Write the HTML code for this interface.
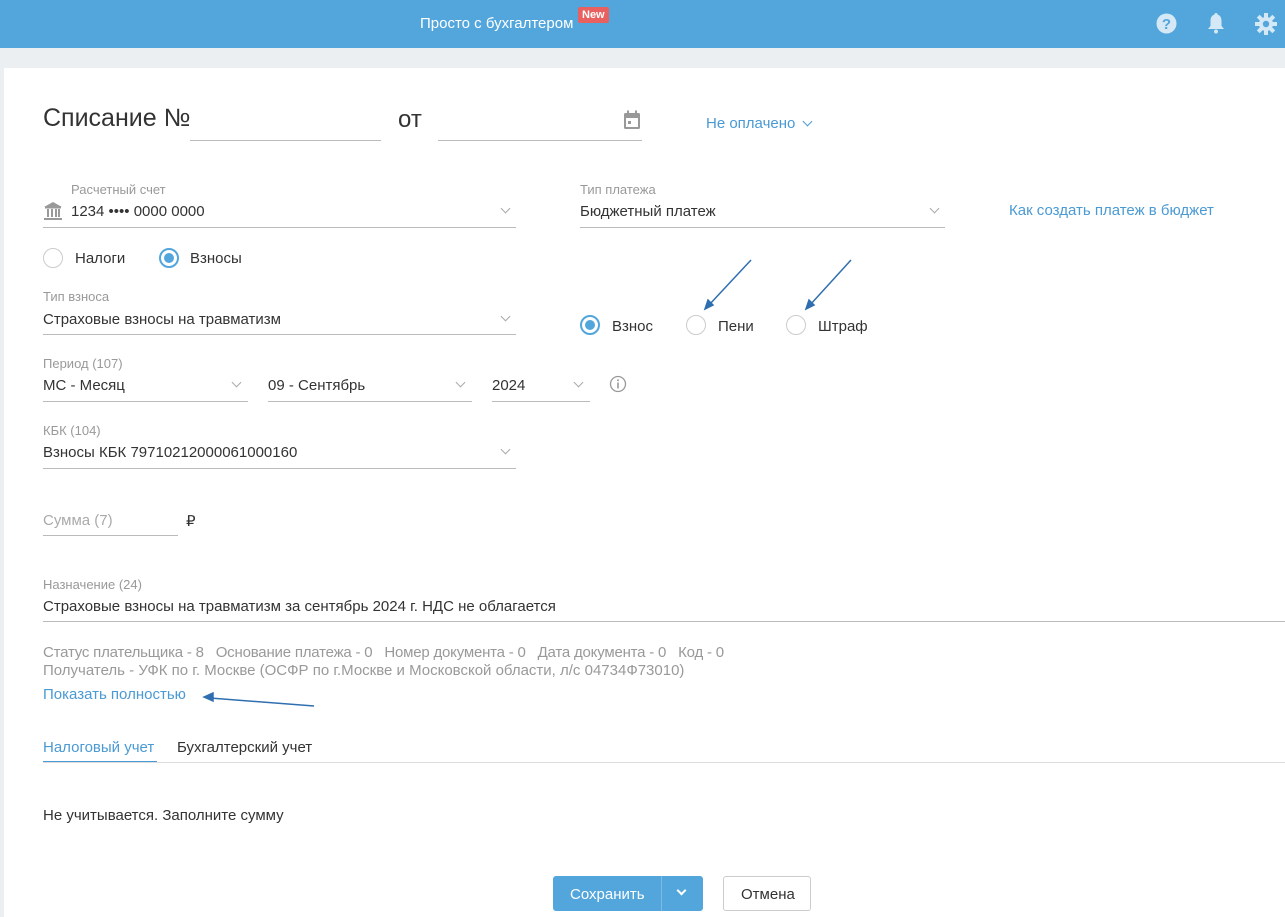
<!DOCTYPE html><html><head><meta charset="utf-8"><style>
*{box-sizing:border-box}body{margin:0;width:1285px;height:917px;overflow:hidden;background:#eceff2;font-family:"Liberation Sans","Noto Sans CJK SC",sans-serif;color:#333;position:relative}
.hdr{position:absolute;left:0;top:0;width:1285px;height:48px;background:#53a6dc}
.main{position:absolute;left:4px;top:68px;width:1281px;height:849px;background:#fff}
.a{position:absolute;white-space:nowrap}
.lbl{font-size:13px;color:#999}
.v{font-size:15px;color:#333}
.ln{position:absolute;height:1px;background:#bbb}
.chev{position:absolute;width:7px;height:7px;border-right:1.5px solid #aaa;border-bottom:1.5px solid #aaa;transform:rotate(45deg)}
.r{position:absolute;width:20px;height:20px;border-radius:50%;border:1px solid #ccc;background:#fff}
.r.on{border:2px solid #53a6dc}.r.on:after{content:"";position:absolute;left:3px;top:3px;width:10px;height:10px;border-radius:50%;background:#53a6dc}
.blue{color:#4a9ad4}
</style></head><body>
<div class="hdr">
<div class="a" style="left:420px;top:15px;color:#fff;font-size:15px">Просто с бухгалтером</div>
<div class="a" style="left:578px;top:7px;background:#e8605f;color:#fff;font-size:11px;font-weight:bold;padding:2px 4px;border-radius:2px">New</div>
<svg class="a" style="left:1156px;top:13px" width="21" height="21"><circle cx="10.5" cy="10.5" r="10" fill="#d4e8f6"/><text x="10.5" y="16" text-anchor="middle" font-size="15" font-weight="bold" fill="#53a6dc" font-family="Liberation Sans">?</text></svg>
<svg class="a" style="left:1207px;top:12px" width="18" height="22"><path d="M9 1a1.5 1.5 0 0 1 1.5 1.5c3 1 4 3.5 4 6.5v5l2.5 3H1l2.5-3v-5c0-3 1-5.5 4-6.5A1.5 1.5 0 0 1 9 1z" fill="#d4e8f6"/><circle cx="9" cy="19.5" r="2" fill="#d4e8f6"/></svg>
<svg class="a" style="left:1255px;top:13px" width="22" height="22" viewBox="0 0 22 22"><g fill="#d4e8f6"><circle cx="11" cy="11" r="7"/><g><rect x="9" y="0" width="4" height="22"/><rect x="0" y="9" width="22" height="4"/><rect x="9" y="0" width="4" height="22" transform="rotate(45 11 11)"/><rect x="9" y="0" width="4" height="22" transform="rotate(-45 11 11)"/></g></g><circle cx="11" cy="11" r="3.2" fill="#53a6dc"/></svg>
</div>
<div class="main"></div>
<div class="a" style="left:43px;top:104px;font-size:25px;color:#333">Списание №</div>
<div class="ln" style="left:190px;top:140px;width:191px"></div>
<div class="a" style="left:398px;top:106px;font-size:24px">от</div>
<div class="ln" style="left:438px;top:140px;width:204px"></div>
<svg class="a" style="left:623px;top:110px" width="18" height="20"><rect x="1" y="3" width="16" height="16" rx="1.5" fill="#999"/><rect x="3" y="8" width="12" height="9" fill="#fff"/><rect x="4" y="0.5" width="2" height="4" fill="#999"/><rect x="12" y="0.5" width="2" height="4" fill="#999"/><rect x="5" y="11" width="3" height="3" fill="#999"/></svg>
<div class="a blue" style="left:706px;top:115px;font-size:15px">Не оплачено</div>
<div class="chev" style="left:804px;top:118px;border-color:#4a9ad4"></div>

<div class="a lbl" style="left:71px;top:182px">Расчетный счет</div>
<svg class="a" style="left:43px;top:201px" width="20" height="20"><path d="M10 1L1 6h18z" fill="#999"/><rect x="2" y="6" width="16" height="1.5" fill="#999"/><rect x="4" y="8" width="2" height="8" fill="#999"/><rect x="8" y="8" width="2" height="8" fill="#999"/><rect x="12" y="8" width="2" height="8" fill="#999"/><rect x="15" y="8" width="2" height="8" fill="#999"/><rect x="1" y="17" width="18" height="2" fill="#999"/></svg>
<div class="a v" style="left:71px;top:203px">1234 •••• 0000 0000</div>
<div class="chev" style="left:502px;top:205px"></div>
<div class="ln" style="left:43px;top:227px;width:473px"></div>
<div class="a lbl" style="left:580px;top:182px">Тип платежа</div>
<div class="a v" style="left:580px;top:203px">Бюджетный платеж</div>
<div class="chev" style="left:931px;top:205px"></div>
<div class="ln" style="left:580px;top:227px;width:365px"></div>
<div class="a blue" style="left:1009px;top:202px;font-size:15px">Как создать платеж в бюджет</div>

<div class="r" style="left:43px;top:248px"></div><div class="a v" style="left:75px;top:250px">Налоги</div>
<div class="r on" style="left:159px;top:248px"></div><div class="a v" style="left:190px;top:250px">Взносы</div>

<div class="a lbl" style="left:43px;top:289px">Тип взноса</div>
<div class="a v" style="left:43px;top:311px">Страховые взносы на травматизм</div>
<div class="chev" style="left:502px;top:313px"></div>
<div class="ln" style="left:43px;top:334px;width:473px"></div>
<div class="r on" style="left:580px;top:315px"></div><div class="a v" style="left:612px;top:318px">Взнос</div>
<div class="r" style="left:686px;top:315px"></div><div class="a v" style="left:718px;top:318px">Пени</div>
<div class="r" style="left:786px;top:315px"></div><div class="a v" style="left:818px;top:318px">Штраф</div>
<svg class="a" style="left:0;top:0" width="1285" height="917"><g stroke="#2f6fb0" stroke-width="1.5" fill="#2f6fb0"><line x1="751" y1="260" x2="709" y2="305"/><path d="M705 309l3-9 5 5z"/><line x1="851" y1="260" x2="810" y2="305"/><path d="M806 309l3-9 5 5z"/><line x1="314" y1="706" x2="210" y2="698"/><path d="M204 697l9-4 0 8z"/></g></svg>

<div class="a lbl" style="left:43px;top:356px">Период (107)</div>
<div class="a v" style="left:43px;top:377px">МС - Месяц</div><div class="chev" style="left:233px;top:379px"></div><div class="ln" style="left:43px;top:401px;width:205px"></div>
<div class="a v" style="left:268px;top:377px">09 - Сентябрь</div><div class="chev" style="left:457px;top:379px"></div><div class="ln" style="left:268px;top:401px;width:204px"></div>
<div class="a v" style="left:492px;top:377px">2024</div><div class="chev" style="left:575px;top:379px"></div><div class="ln" style="left:492px;top:401px;width:98px"></div>
<svg class="a" style="left:609px;top:375px" width="18" height="18"><circle cx="9" cy="9" r="7.5" fill="none" stroke="#999" stroke-width="1.3"/><rect x="8.2" y="7.5" width="1.6" height="6" fill="#999"/><circle cx="9" cy="5.3" r="1" fill="#999"/></svg>

<div class="a lbl" style="left:43px;top:423px">КБК (104)</div>
<div class="a v" style="left:43px;top:444px">Взносы КБК 79710212000061000160</div>
<div class="chev" style="left:502px;top:446px"></div>
<div class="ln" style="left:43px;top:468px;width:473px"></div>

<div class="a" style="left:43px;top:512px;font-size:15px;color:#aaa">Сумма (7)</div>
<div class="ln" style="left:43px;top:535px;width:135px"></div>
<div class="a v" style="left:186px;top:512px">₽</div>

<div class="a lbl" style="left:43px;top:577px">Назначение (24)</div>
<div class="a v" style="left:43px;top:598px">Страховые взносы на травматизм за сентябрь 2024 г. НДС не облагается</div>
<div class="ln" style="left:43px;top:621px;width:1242px"></div>

<div class="a" style="left:43px;top:644px;font-size:15px;color:#999;letter-spacing:-0.2px">Статус плательщика - 8&nbsp;&nbsp;&nbsp;Основание платежа - 0&nbsp;&nbsp;&nbsp;Номер документа - 0&nbsp;&nbsp;&nbsp;Дата документа - 0&nbsp;&nbsp;&nbsp;Код - 0</div>
<div class="a" style="left:43px;top:662px;font-size:15px;color:#999">Получатель - УФК по г. Москве (ОСФР по г.Москве и Московской области, л/с 04734Ф73010)</div>
<div class="a blue" style="left:43px;top:686px;font-size:15px">Показать полностью</div>

<div class="a blue" style="left:43px;top:739px;font-size:15px">Налоговый учет</div>
<div class="a" style="left:43px;top:761px;width:114px;height:2px;background:#4a9ad4"></div>
<div class="a v" style="left:177px;top:739px">Бухгалтерский учет</div>
<div class="ln" style="left:43px;top:762px;width:1242px;background:#ddd"></div>

<div class="a v" style="left:43px;top:807px">Не учитывается. Заполните сумму</div>

<div class="a" style="left:553px;top:876px;width:150px;height:35px;background:#53a6dc;border-radius:3px"></div>
<div class="a" style="left:570px;top:886px;color:#fff;font-size:15px">Сохранить</div>
<div class="a" style="left:661px;top:876px;width:1px;height:35px;background:#7bbce6"></div>
<div class="chev" style="left:678px;top:887px;border-color:#fff;border-width:2px"></div>
<div class="a" style="left:723px;top:876px;width:88px;height:35px;border:1px solid #ccc;border-radius:3px"></div>
<div class="a v" style="left:741px;top:886px">Отмена</div>
</body></html>
